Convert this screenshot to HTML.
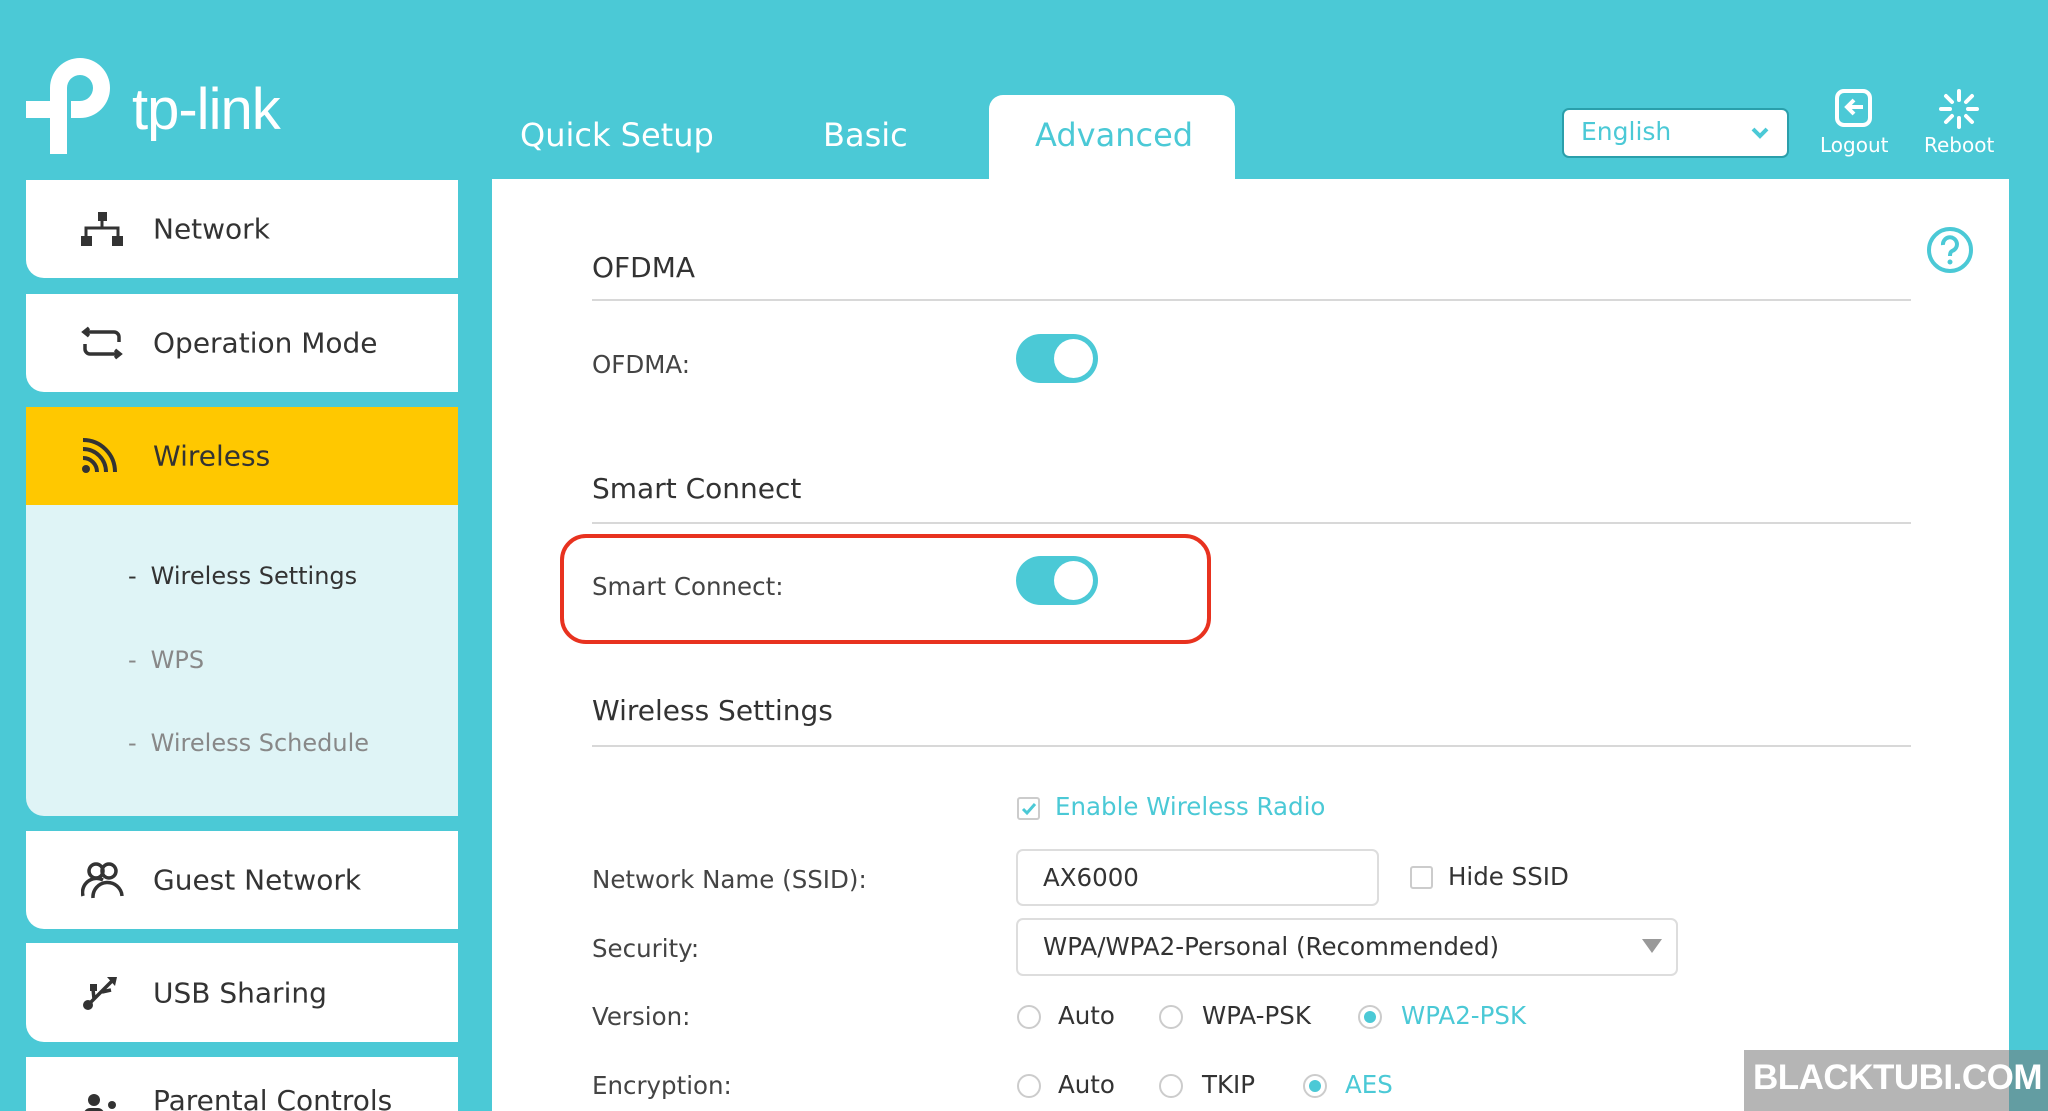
<!DOCTYPE html>
<html style="width:2048px;height:1111px;overflow:hidden"><head><meta charset="utf-8"><style>
*{margin:0;padding:0;box-sizing:border-box}
body{width:2048px;height:1111px;overflow:hidden;background:#4bc9d6;font-family:"DejaVu Sans","Liberation Sans",sans-serif;position:relative;color:#333}
.a{position:absolute}
.nav{position:absolute;left:26px;width:432px;background:#fff;border-bottom-left-radius:18px}
.nav span{position:absolute;left:127px;font-size:28px;color:#333;top:50%;transform:translateY(-50%)}
.nav svg{position:absolute;left:55px;top:50%;transform:translateY(-50%)}
.sub{position:absolute;left:128px;font-size:24px;color:#888}
.sub b{font-weight:normal;margin-right:14px}
.h{position:absolute;left:592px;font-size:28px;color:#333}
.line{position:absolute;left:592px;width:1319px;height:2px;background:#d8d8d8}
.lbl{position:absolute;left:592px;font-size:24.5px;color:#444}
.tog{position:absolute;left:1016px;width:82px;height:49px;border-radius:25px;background:#4bc9d6}
.tog:after{content:"";position:absolute;right:5px;top:5px;width:39px;height:39px;border-radius:50%;background:#fff}
.rad{position:absolute;width:24px;height:24px;border-radius:50%;border:2px solid #ccc;background:#fff}
.rad.on:after{content:"";position:absolute;left:4px;top:4px;width:12px;height:12px;border-radius:50%;background:#4bc9d6}
.rt{position:absolute;font-size:24.5px;color:#333}
</style></head><body>
<svg class="a" style="left:26px;top:56px" width="100" height="100" viewBox="0 0 100 100">
<path d="M24 45 V32 A30 30 0 1 1 54 62 H45 V45 H54 A13 13 0 1 0 41 32 V98 H24 V62 H0 V45 Z" fill="#fff"/>
</svg>
<div class="a" style="left:132px;top:76px;font-size:58px;color:#fff;font-family:'Liberation Sans',sans-serif;letter-spacing:-1px">tp-link</div>
<div class="a" style="left:520px;top:116px;font-size:32px;color:#fff">Quick Setup</div>
<div class="a" style="left:823px;top:116px;font-size:32px;color:#fff">Basic</div>
<div class="a" style="left:989px;top:95px;width:246px;height:90px;background:#fff;border-radius:14px 14px 0 0"></div>
<div class="a" style="left:1035px;top:116px;font-size:32px;color:#4bc9d6">Advanced</div>
<div class="a" style="left:1562px;top:108px;width:227px;height:50px;background:#fff;border:2px solid #2a9fab;border-radius:7px"></div>
<div class="a" style="left:1581px;top:117px;font-size:25px;color:#4bc9d6">English</div>
<svg class="a" style="left:1750px;top:126px" width="20" height="14"><path d="M3 3 L10 10 L17 3" stroke="#4bc9d6" stroke-width="4" fill="none"/></svg>
<svg class="a" style="left:1834px;top:88px" width="40" height="40"><rect x="3" y="3" width="33" height="34" rx="7" fill="none" stroke="#fff" stroke-width="4"/><path d="M20 12 L13 19 L20 26 M13 19 H29" stroke="#fff" stroke-width="4" fill="none"/></svg>
<div class="a" style="left:1820px;top:133px;font-size:20px;color:#fff">Logout</div>
<svg class="a" style="left:1938px;top:88px" width="42" height="42" viewBox="0 0 42 42"><g stroke="#fff" stroke-width="4" stroke-linecap="round"><path d="M21 3V12M21 30V39M3 21H12M30 21H39M8 8L14 14M28 28L34 34M34 8L28 14M14 28L8 34"/></g></svg>
<div class="a" style="left:1924px;top:133px;font-size:20px;color:#fff">Reboot</div>
<div class="nav" style="top:180px;height:98px"><svg width="42" height="36" viewBox="0 0 42 36"><rect x="17" y="1" width="9" height="9" fill="#333"/><path d="M21 10V17M5 26V17H37V26" stroke="#333" stroke-width="3" fill="none"/><rect x="0" y="25" width="11" height="10" fill="#333"/><rect x="31" y="25" width="11" height="10" fill="#333"/></svg><span>Network</span></div>
<div class="nav" style="top:294px;height:98px"><svg width="42" height="38" viewBox="0 0 42 38"><path d="M8 4 L3 8 L8 12 M3 8 H33 A5 5 0 0 1 38 13 V18 M34 34 L39 30 L34 26 M39 30 H9 A5 5 0 0 1 4 25 V20" stroke="#333" stroke-width="3.5" fill="none"/></svg><span>Operation Mode</span></div>
<div class="nav" style="top:407px;height:98px;background:#ffc800;border-radius:0"><svg width="36" height="36" viewBox="0 0 36 36"><circle cx="5" cy="31" r="4" fill="#333"/><path d="M2 20A14 14 0 0 1 16 34M2 11A23 23 0 0 1 25 34M2 2A32 32 0 0 1 34 34" stroke="#333" stroke-width="4" fill="none"/></svg><span>Wireless</span></div>
<div class="a" style="left:26px;top:505px;width:432px;height:311px;background:#dff4f6;border-bottom-left-radius:18px"></div>
<div class="sub" style="top:562px;color:#333"><b>-</b>Wireless Settings</div>
<div class="sub" style="top:646px"><b>-</b>WPS</div>
<div class="sub" style="top:729px"><b>-</b>Wireless Schedule</div>
<div class="nav" style="top:831px;height:98px"><svg width="44" height="40" viewBox="0 0 44 40"><g stroke="#333" stroke-width="3.5" fill="none"><circle cx="15" cy="11" r="7"/><circle cx="28" cy="11" r="7"/><path d="M2 36A14 14 0 0 1 22 20M12 38A14 14 0 0 1 41 36"/></g></svg><span>Guest Network</span></div>
<div class="nav" style="top:943px;height:99px"><svg width="38" height="36" viewBox="0 0 38 36"><g stroke="#333" stroke-width="3.5" fill="none"><path d="M7 30 L31 6M13 24 L12 14M21 17 L30 15"/></g><circle cx="7" cy="30" r="5" fill="#333"/><path d="M26 2 L36 2 L34 11Z" fill="#333"/><rect x="9" y="9" width="7" height="7" fill="#333"/></svg><span>USB Sharing</span></div>
<div class="nav" style="top:1057px;height:54px;border-radius:0"><svg style="top:36px;transform:none" width="40" height="30" viewBox="0 0 40 30"><circle cx="13" cy="7" r="6" fill="#333"/><circle cx="31" cy="12" r="4" fill="#333"/><rect x="3" y="15" width="20" height="15" rx="6" fill="#333"/><rect x="25" y="19" width="12" height="11" rx="4" fill="#333"/></svg><span style="top:27px;transform:none">Parental Controls</span></div>
<div class="a" style="left:492px;top:179px;width:1517px;height:932px;background:#fff"></div>
<svg class="a" style="left:1926px;top:226px" width="48" height="48" viewBox="0 0 48 48"><circle cx="24" cy="24" r="21" stroke="#4bc9d6" stroke-width="4" fill="none"/><path d="M17 19A7 7 0 1 1 26 25Q24 26 24 30" stroke="#4bc9d6" stroke-width="4" fill="none"/><circle cx="24" cy="36" r="2.5" fill="#4bc9d6"/></svg>
<div class="h" style="top:251px">OFDMA</div><div class="line" style="top:299px"></div>
<div class="lbl" style="top:350px">OFDMA:</div><div class="tog" style="top:334px"></div>
<div class="h" style="top:472px">Smart Connect</div><div class="line" style="top:522px"></div>
<div class="lbl" style="top:572px">Smart Connect:</div><div class="tog" style="top:556px"></div>
<div class="a" style="left:560px;top:534px;width:651px;height:110px;border:4px solid #e8321f;border-radius:26px"></div>
<div class="h" style="top:694px">Wireless Settings</div><div class="line" style="top:745px"></div>
<div class="a" style="left:1017px;top:797px;width:23px;height:23px;border:2px solid #ccc;border-radius:3px"></div>
<svg class="a" style="left:1020px;top:800px" width="18" height="18"><path d="M3 9 L7 13 L15 4" stroke="#4bc9d6" stroke-width="3" fill="none"/></svg>
<div class="rt" style="left:1055px;top:792px;color:#4bc9d6">Enable Wireless Radio</div>
<div class="lbl" style="top:865px">Network Name (SSID):</div>
<div class="a" style="left:1016px;top:849px;width:363px;height:57px;border:2px solid #ddd;border-radius:7px"></div>
<div class="rt" style="left:1043px;top:863px">AX6000</div>
<div class="a" style="left:1410px;top:866px;width:23px;height:23px;border:2px solid #ccc;border-radius:3px"></div>
<div class="rt" style="left:1448px;top:862px">Hide SSID</div>
<div class="lbl" style="top:934px">Security:</div>
<div class="a" style="left:1016px;top:918px;width:662px;height:58px;border:2px solid #ddd;border-radius:7px"></div>
<div class="rt" style="left:1043px;top:932px">WPA/WPA2-Personal (Recommended)</div>
<svg class="a" style="left:1642px;top:939px" width="20" height="16"><path d="M0 0H20L10 14Z" fill="#999"/></svg>
<div class="lbl" style="top:1002px">Version:</div>
<div class="rad" style="left:1017px;top:1005px"></div><div class="rt" style="left:1058px;top:1001px">Auto</div>
<div class="rad" style="left:1159px;top:1005px"></div><div class="rt" style="left:1202px;top:1001px">WPA-PSK</div>
<div class="rad on" style="left:1358px;top:1005px"></div><div class="rt" style="left:1401px;top:1001px;color:#4bc9d6">WPA2-PSK</div>
<div class="lbl" style="top:1071px">Encryption:</div>
<div class="rad" style="left:1017px;top:1074px"></div><div class="rt" style="left:1058px;top:1070px">Auto</div>
<div class="rad" style="left:1159px;top:1074px"></div><div class="rt" style="left:1202px;top:1070px">TKIP</div>
<div class="rad on" style="left:1303px;top:1074px"></div><div class="rt" style="left:1345px;top:1070px;color:#4bc9d6">AES</div>
<div class="a" style="left:1744px;top:1050px;width:304px;height:61px;background:rgba(120,120,120,0.55)"></div>
<div class="a" style="left:1753px;top:1058px;font-size:35px;font-weight:bold;color:#fff;font-family:'Liberation Sans',sans-serif;letter-spacing:-0.5px">BLACKTUBI.COM</div>
</body></html>
